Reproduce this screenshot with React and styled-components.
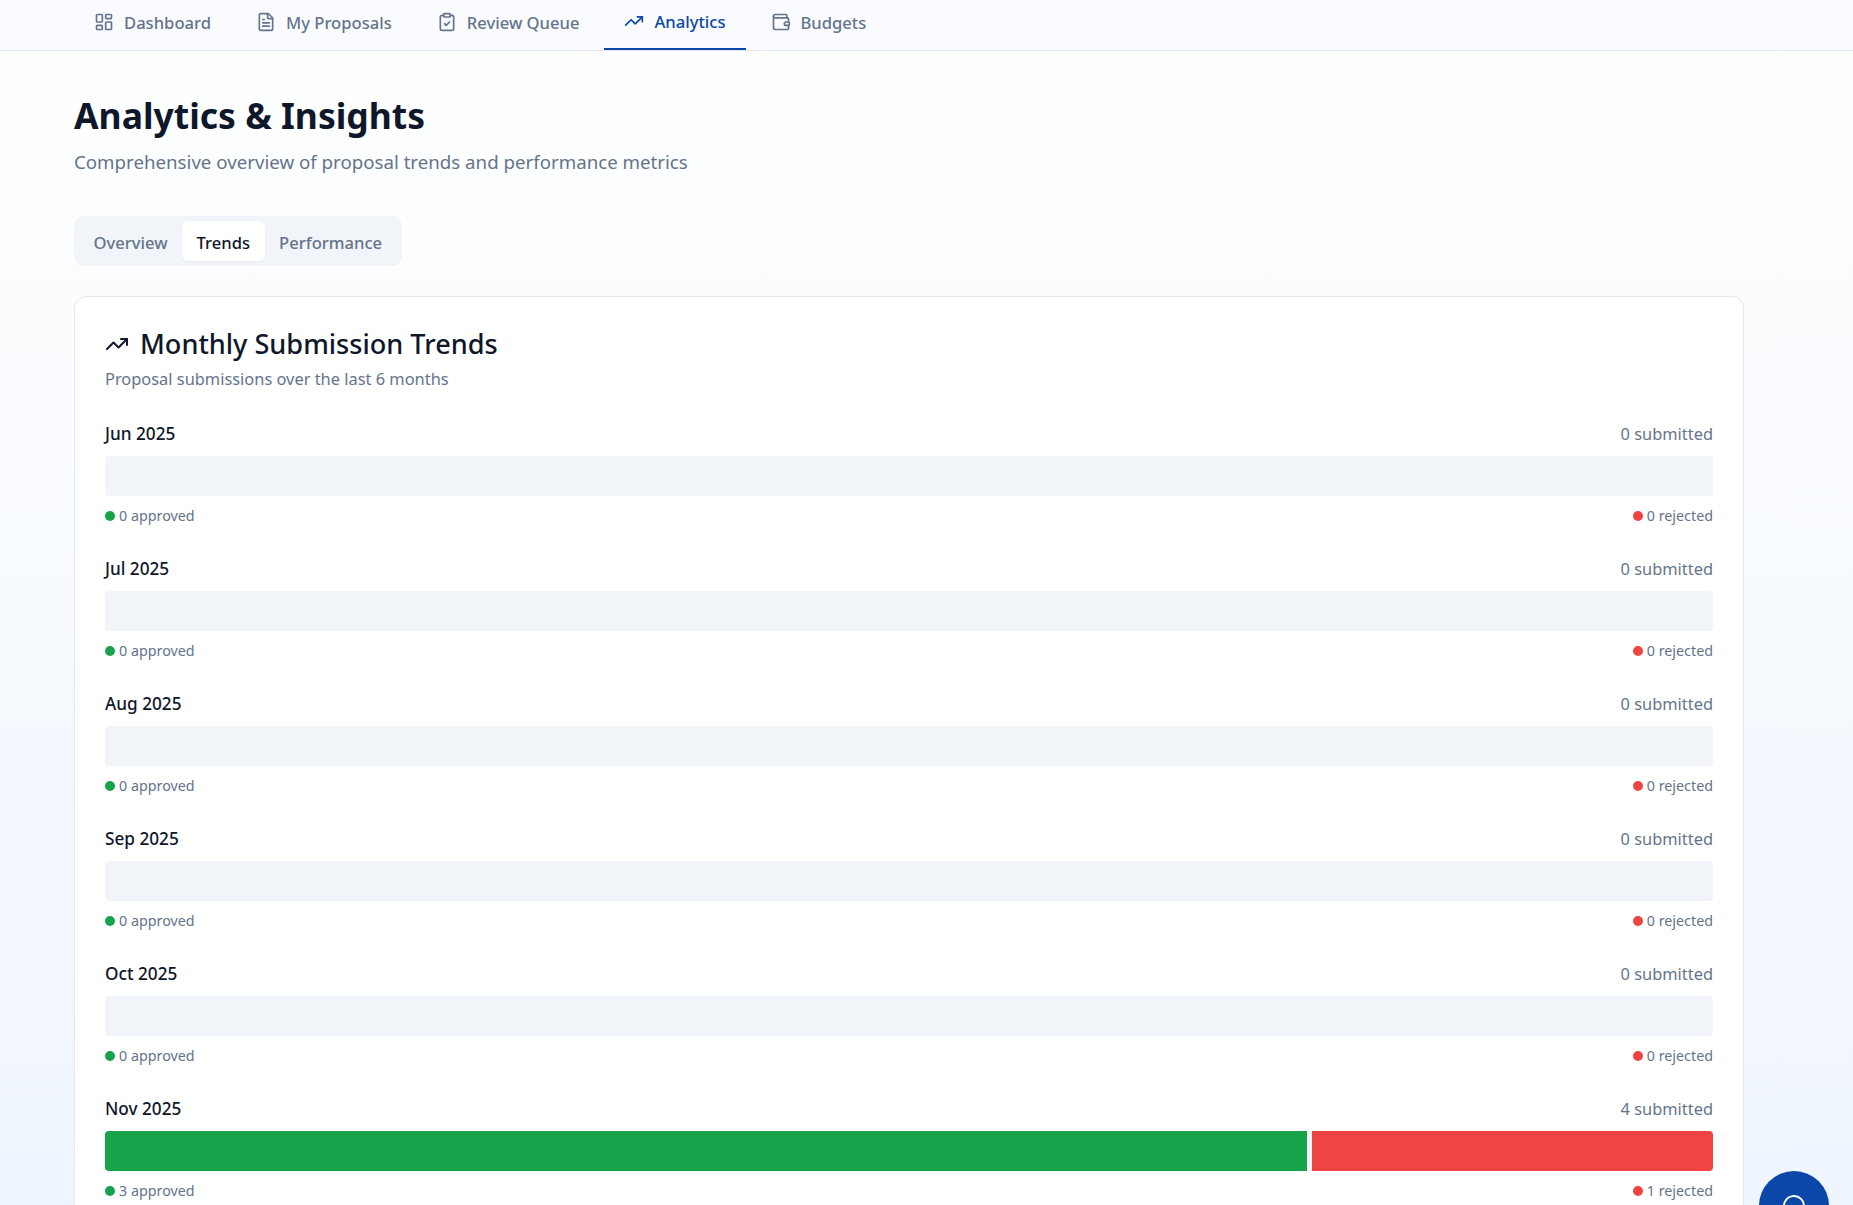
import React from "react";
import styled, { createGlobalStyle } from "styled-components";
import {
	LayoutDashboard,
	FileText,
	ClipboardCheck,
	TrendingUp,
	Wallet,
	MessageCircle,
} from "lucide-react";

const months = [
	{ label: "Jun 2025", submitted: 0, approved: 0, rejected: 0 },
	{ label: "Jul 2025", submitted: 0, approved: 0, rejected: 0 },
	{ label: "Aug 2025", submitted: 0, approved: 0, rejected: 0 },
	{ label: "Sep 2025", submitted: 0, approved: 0, rejected: 0 },
	{ label: "Oct 2025", submitted: 0, approved: 0, rejected: 0 },
	{ label: "Nov 2025", submitted: 4, approved: 3, rejected: 1 },
];

const navItems = [
	{ label: "Dashboard", icon: LayoutDashboard },
	{ label: "My Proposals", icon: FileText },
	{ label: "Review Queue", icon: ClipboardCheck },
	{ label: "Analytics", icon: TrendingUp, active: true },
	{ label: "Budgets", icon: Wallet },
];

export default function App() {
	return (
		<>
			<GlobalStyle />
			<Page>
				<NavBar>
					{navItems.map((item) => (
						<NavItem key={item.label} $active={item.active}>
							<item.icon size={20} strokeWidth={2} />
							{item.label}
						</NavItem>
					))}
				</NavBar>
				<Main>
					<Title>Analytics &amp; Insights</Title>
					<Subtitle>
						Comprehensive overview of proposal trends and performance metrics
					</Subtitle>
					<TabList>
						<Tab>Overview</Tab>
						<Tab $active>Trends</Tab>
						<Tab>Performance</Tab>
					</TabList>
					<Card>
						<CardTitle>
							<TrendingUp size={24} strokeWidth={2} />
							Monthly Submission Trends
						</CardTitle>
						<CardSubtitle>Proposal submissions over the last 6 months</CardSubtitle>
						<MonthList>
							{months.map((m) => (
								<Month key={m.label}>
									<MonthHead>
										<MonthName>{m.label}</MonthName>
										<Submitted>{m.submitted} submitted</Submitted>
									</MonthHead>
									<Bar>
										{m.submitted > 0 && (
											<>
												<Fill
													$color="#16a34a"
													style={{ width: `${(m.approved / m.submitted) * 100}%` }}
												/>
												<Fill
													$color="#ef4444"
													style={{ width: `${(m.rejected / m.submitted) * 100}%` }}
												/>
											</>
										)}
									</Bar>
									<Legend>
										<LegendItem>
											<Dot $color="#16a34a" />
											{m.approved} approved
										</LegendItem>
										<LegendItem>
											<Dot $color="#ef4444" />
											{m.rejected} rejected
										</LegendItem>
									</Legend>
								</Month>
							))}
						</MonthList>
					</Card>
				</Main>
				<ChatButton>
					<MessageCircle size={24} strokeWidth={2} />
				</ChatButton>
			</Page>
		</>
	);
}

const GlobalStyle = createGlobalStyle`
	html, body {
		margin: 0;
		height: 100%;
		overflow: hidden;
	}
	body {
		font-family: "Noto Sans", "Open Sans", sans-serif;
		color: #0f172a;
	}
	* {
		box-sizing: border-box;
	}
`;

const Page = styled.div`
	position: relative;
	height: 1205px;
	overflow: hidden;
	background: linear-gradient(180deg, #ffffff 0%, #eff5fe 100%);
`;

const NavBar = styled.nav`
	display: flex;
	gap: 5px;
	height: 51px;
	padding-left: 74px;
	background: #fafbff;
	border-bottom: 1px solid #e2e8f0;
`;

const NavItem = styled.a`
	display: flex;
	align-items: center;
	gap: 10px;
	height: 50px;
	padding: 0 20px 6px;
	font-size: 16.6px;
	font-weight: 500;
	color: ${(p) => (p.$active ? "#0b47a8" : "#64748b")};
	border-bottom: ${(p) => (p.$active ? "2px solid #0b47a8" : "0")};
`;

const Main = styled.main`
	padding: 44px 109px 0 74px;
`;

const Title = styled.h1`
	margin: 0;
	font-size: 35.5px;
	line-height: 40px;
	font-weight: 700;
	color: #0f172a;
`;

const Subtitle = styled.p`
	margin: 13px 0 0;
	font-size: 18.7px;
	line-height: 28px;
	color: #64748b;
`;

const TabList = styled.div`
	display: inline-flex;
	margin-top: 40px;
	padding: 5px;
	height: 50px;
	background: #f1f5f9;
	border-radius: 10px;
`;

const Tab = styled.button`
	padding: 2px 14.5px 0;
	border: 0;
	border-radius: 6px;
	font: 500 16.6px "Noto Sans", sans-serif;
	color: ${(p) => (p.$active ? "#0f172a" : "#64748b")};
	background: ${(p) => (p.$active ? "#ffffff" : "transparent")};
	box-shadow: ${(p) => (p.$active ? "0 1px 2px rgba(0,0,0,.05)" : "none")};
`;

const Card = styled.section`
	margin-top: 30px;
	padding: 31px 30px 30px;
	background: #ffffff;
	border: 1px solid #e2e8f0;
	border-radius: 12px;
`;

const CardTitle = styled.h2`
	display: flex;
	align-items: center;
	gap: 11px;
	margin: 0;
	font-size: 27.1px;
	line-height: 32px;
	font-weight: 500;
	color: #0f172a;
`;

const CardSubtitle = styled.p`
	margin: 7px 0 0;
	font-size: 16.4px;
	line-height: 24px;
	color: #64748b;
`;

const MonthList = styled.div`
	display: flex;
	flex-direction: column;
	gap: 30px;
	margin-top: 31px;
`;

const Month = styled.div``;

const MonthHead = styled.div`
	display: flex;
	justify-content: space-between;
	line-height: 24px;
	margin-bottom: 10px;
`;

const MonthName = styled.span`
	font-size: 17.2px;
	font-weight: 500;
	color: #0f172a;
`;

const Submitted = styled.span`
	font-size: 16.4px;
	color: #64748b;
`;

const Bar = styled.div`
	display: flex;
	gap: 5px;
	height: 40px;
	background: #f1f5f9;
	border-radius: 4px;
	overflow: hidden;
`;

const Fill = styled.div`
	background: ${(p) => p.$color};
`;

const Legend = styled.div`
	display: flex;
	justify-content: space-between;
	margin-top: 8px;
	font-size: 14.3px;
	line-height: 23px;
	color: #64748b;
`;

const LegendItem = styled.span`
	display: flex;
	align-items: center;
	gap: 4px;
`;

const Dot = styled.i`
	width: 10px;
	height: 10px;
	border-radius: 50%;
	background: ${(p) => p.$color};
`;

const ChatButton = styled.button`
	position: absolute;
	left: 1759px;
	top: 1171px;
	display: flex;
	align-items: center;
	justify-content: center;
	width: 70px;
	height: 70px;
	border: 0;
	border-radius: 50%;
	color: #ffffff;
	background: #0b47a8;
`;
